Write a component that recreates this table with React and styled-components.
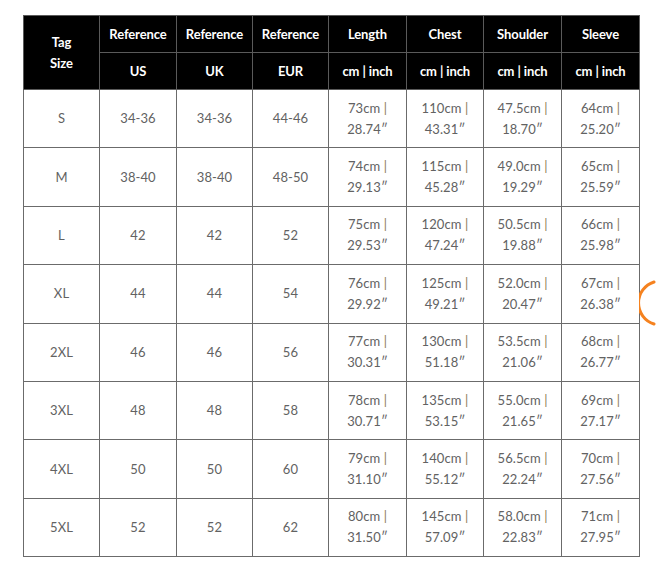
import React from 'react';
import styled, { createGlobalStyle } from 'styled-components';

const GlobalStyle = createGlobalStyle`
  html, body {
    margin: 0;
    padding: 0;
    background: #ffffff;
  }
  body {
    font-family: Lato, "Noto Sans", sans-serif;
    overflow: hidden;
  }
`;

const Page = styled.div`
  position: relative;
  width: 656px;
  height: 568px;
  padding: 15px 0 0 23px;
  box-sizing: border-box;
  overflow: hidden;
`;

const Table = styled.table`
  border-collapse: collapse;
  table-layout: fixed;
  width: 617px;
  font-size: 13px;
`;

const HeadCell = styled.th`
  background: #000;
  color: #fff;
  font-weight: 700;
  font-size: 13px;
  height: 36px;
  padding: 0;
  border: 1px solid #5a5a5a;
  text-align: center;
  vertical-align: middle;
  line-height: ${(p) => (p.$tall ? '21px' : '16px')};
  letter-spacing: -0.1px;
`;

const Row = styled.tr`
  height: 58.4px;
`;

const Cell = styled.td`
  border: 1px solid #6b6b6b;
  color: #626262;
  text-align: center;
  vertical-align: middle;
  padding: 0 4px;
  line-height: 21px;
  font-size: 13px;
  letter-spacing: 0.1px;
`;

const Bar = styled.span`
  color: #8a7a55;
`;

const Arc = styled.svg`
  position: absolute;
  right: 0;
  top: 279px;
`;

const widths = [76, 77, 76, 76, 78, 77, 78, 78];

const rows = [
  ['S', '34-36', '34-36', '44-46', ['73', '28.74'], ['110', '43.31'], ['47.5', '18.70'], ['64', '25.20']],
  ['M', '38-40', '38-40', '48-50', ['74', '29.13'], ['115', '45.28'], ['49.0', '19.29'], ['65', '25.59']],
  ['L', '42', '42', '52', ['75', '29.53'], ['120', '47.24'], ['50.5', '19.88'], ['66', '25.98']],
  ['XL', '44', '44', '54', ['76', '29.92'], ['125', '49.21'], ['52.0', '20.47'], ['67', '26.38']],
  ['2XL', '46', '46', '56', ['77', '30.31'], ['130', '51.18'], ['53.5', '21.06'], ['68', '26.77']],
  ['3XL', '48', '48', '58', ['78', '30.71'], ['135', '53.15'], ['55.0', '21.65'], ['69', '27.17']],
  ['4XL', '50', '50', '60', ['79', '31.10'], ['140', '55.12'], ['56.5', '22.24'], ['70', '27.56']],
  ['5XL', '52', '52', '62', ['80', '31.50'], ['145', '57.09'], ['58.0', '22.83'], ['71', '27.95']],
];

const Measure = ({ v }) => (
  <>
    {v[0]}cm <Bar>|</Bar>
    <br />
    {v[1]}″
  </>
);

export default function App() {
  return (
    <Page>
      <GlobalStyle />
      <Table>
        <colgroup>
          {widths.map((w, i) => (
            <col key={i} style={{ width: w }} />
          ))}
        </colgroup>
        <thead>
          <tr>
            <HeadCell rowSpan={2} $tall>
              Tag
              <br />
              Size
            </HeadCell>
            <HeadCell>Reference</HeadCell>
            <HeadCell>Reference</HeadCell>
            <HeadCell>Reference</HeadCell>
            <HeadCell>Length</HeadCell>
            <HeadCell>Chest</HeadCell>
            <HeadCell>Shoulder</HeadCell>
            <HeadCell>Sleeve</HeadCell>
          </tr>
          <tr>
            <HeadCell>US</HeadCell>
            <HeadCell>UK</HeadCell>
            <HeadCell>EUR</HeadCell>
            <HeadCell>cm | inch</HeadCell>
            <HeadCell>cm | inch</HeadCell>
            <HeadCell>cm | inch</HeadCell>
            <HeadCell>cm | inch</HeadCell>
          </tr>
        </thead>
        <tbody>
          {rows.map((r) => (
            <Row key={r[0]}>
              {r.map((c, i) => (
                <Cell key={i}>{Array.isArray(c) ? <Measure v={c} /> : c}</Cell>
              ))}
            </Row>
          ))}
        </tbody>
      </Table>
      <Arc width="17" height="48" viewBox="0 0 17 48">
        <path d="M15 3 A22 22 0 0 0 15 45" fill="none" stroke="#f5821f" strokeWidth="3" strokeLinecap="round" />
      </Arc>
    </Page>
  );
}
